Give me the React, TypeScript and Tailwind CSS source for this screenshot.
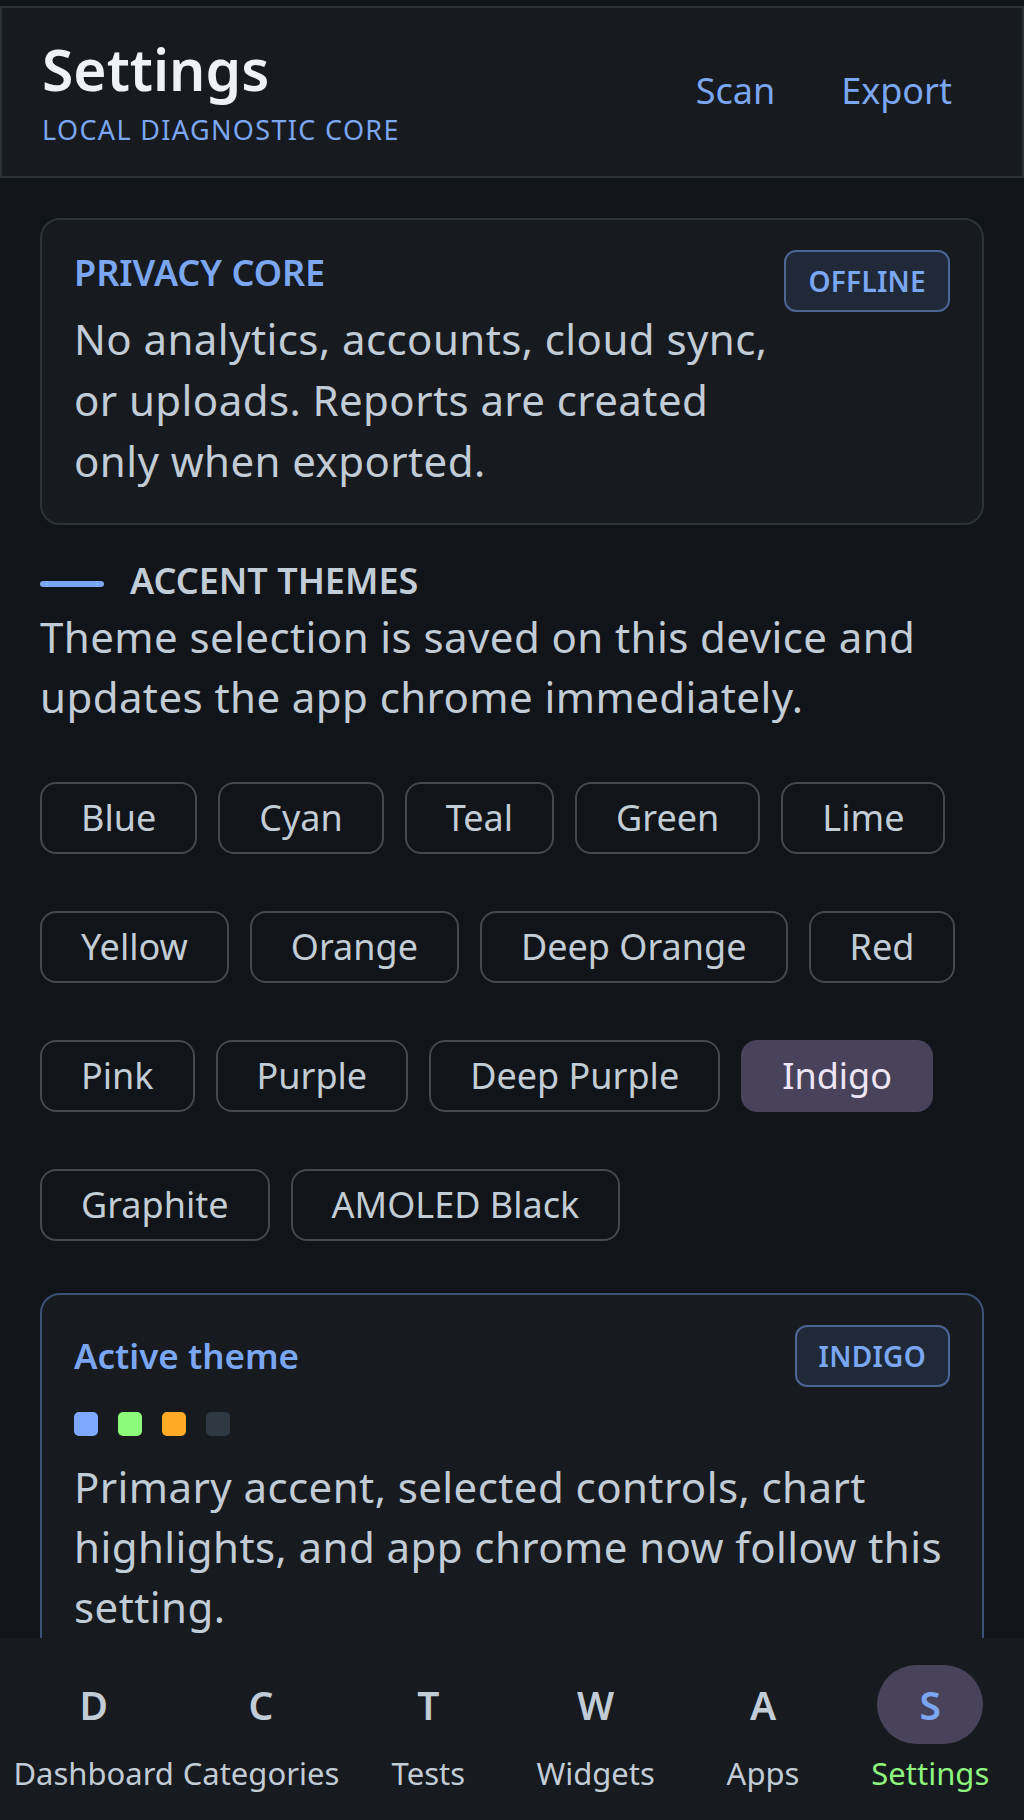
import React from 'react';

const themes = [
  'Blue',
  'Cyan',
  'Teal',
  'Green',
  'Lime',
  'Yellow',
  'Orange',
  'Deep Orange',
  'Red',
  'Pink',
  'Purple',
  'Deep Purple',
  'Indigo',
  'Graphite',
  'AMOLED Black',
];

const navItems = [
  { letter: 'D', label: 'Dashboard' },
  { letter: 'C', label: 'Categories' },
  { letter: 'T', label: 'Tests' },
  { letter: 'W', label: 'Widgets' },
  { letter: 'A', label: 'Apps' },
  { letter: 'S', label: 'Settings', active: true },
];

export default function App() {
  const selected = 'Indigo';

  return (
    <div className="min-h-screen bg-[#111418] pt-[6px] font-['Noto_Sans',sans-serif] text-[#c2ccd6]">
      {/* Top bar */}
      <header className="flex items-center justify-between border-2 border-[#2a3038] bg-[#171a1f] px-10 pt-[26px] pb-[28px]">
        <div>
          <h1 className="text-[57px] leading-[70px] font-semibold text-[#eef2f5]">Settings</h1>
          <div className="mt-[8px] text-[27px] leading-[36px] tracking-[0.05em] text-[#7ba7f2]">
            LOCAL DIAGNOSTIC CORE
          </div>
        </div>
        <div className="flex items-center gap-[6px] text-[36px] leading-[48px] text-[#7ba7f2]">
          <button className="px-[30px]">Scan</button>
          <button className="px-[30px]">Export</button>
        </div>
      </header>

      <main className="px-10 pb-[240px]">
        {/* Privacy Core */}
        <section className="mt-10 flex gap-4 rounded-[20px] border-2 border-[#2c333b] bg-[#171a1f] px-8 pt-[30px] pb-8">
          <div className="min-w-0 flex-1">
            <h2 className="text-[36px] leading-[46px] font-semibold text-[#7ba7f2]">PRIVACY CORE</h2>
            <p className="mt-3 text-[42px] leading-[61px] tracking-[0.01em]">
              No analytics, accounts, cloud sync, or uploads. Reports are created only when exported.
            </p>
          </div>
          <Badge>OFFLINE</Badge>
        </section>

        {/* Accent themes */}
        <section className="mt-[34px]">
          <div className="flex items-center gap-[26px]">
            <span className="mt-[5px] h-[6px] w-16 rounded-full bg-[#7ba7f2]" aria-hidden />
            <h2 className="text-[36px] leading-[44px] font-semibold text-[#c2cdd7]">ACCENT THEMES</h2>
          </div>
          <p className="mt-1 text-[42px] leading-[60px] tracking-[0.01em]">
            Theme selection is saved on this device and updates the app chrome immediately.
          </p>

          <div className="mt-[55px] flex flex-wrap gap-x-[21px] gap-y-[57px]">
            {themes.map((name) => (
              <button
                key={name}
                className={
                  name === selected
                    ? 'flex h-[72px] items-center justify-center rounded-[16px] border-2 border-[#48435a] bg-[#48435a] px-[39px] text-[36px] leading-[48px] text-[#eee6f7]'
                    : 'flex h-[72px] items-center justify-center rounded-[16px] border-2 border-[#46474f] px-[39px] text-[36px] leading-[48px] text-[#c3cdd6]'
                }
              >
                {name}
              </button>
            ))}
          </div>
        </section>

        {/* Active theme */}
        <section className="mt-[52px] rounded-[20px] border-2 border-[#3c5278] bg-[#171a1f] px-8 pt-[30px] pb-8">
          <div className="flex items-center justify-between gap-4">
            <h2 className="text-[35px] leading-[46px] font-semibold text-[#7ba7f2]">Active theme</h2>
            <Badge>INDIGO</Badge>
          </div>
          <div className="mt-[25px] flex gap-[20px]">
            <span className="h-[24px] w-[24px] rounded-[5px] bg-[#7fa9ff]" />
            <span className="h-[24px] w-[24px] rounded-[5px] bg-[#8cfa7a]" />
            <span className="h-[24px] w-[24px] rounded-[5px] bg-[#ffab26]" />
            <span className="h-[24px] w-[24px] rounded-[5px] bg-[#2e3842]" />
          </div>
          <p className="mt-[21px] text-[42px] leading-[60px] tracking-[0.01em]">
            Primary accent, selected controls, chart highlights, and app chrome now follow this setting.
          </p>
          <div className="mt-8 h-[120px]" />
        </section>
      </main>

      {/* Bottom navigation */}
      <nav className="fixed inset-x-0 bottom-0 grid h-[182px] grid-cols-6 bg-[#171a1f] px-[10px] pt-[27px]">
        {navItems.map((item) => (
          <div key={item.label} className="flex flex-col items-center">
            <div
              className={`flex h-[79px] w-[106px] items-center justify-center rounded-full text-[39px] leading-[48px] font-semibold ${
                item.active ? 'bg-[#48435a] text-[#7ba7f2]' : 'text-[#c2ccd6]'
              }`}
            >
              {item.letter}
            </div>
            <div
              className={`mt-[9px] text-[31px] leading-[40px] whitespace-nowrap ${
                item.active ? 'text-[#8ef57e]' : 'text-[#c2ccd6]'
              }`}
            >
              {item.label}
            </div>
          </div>
        ))}
      </nav>
    </div>
  );
}

function Badge({ children }: { children: React.ReactNode }) {
  return (
    <span className="flex h-[62px] shrink-0 items-center rounded-[12px] border-2 border-[#4b6594] bg-[#1f2937] px-[22px] text-[28px] leading-[36px] font-semibold tracking-[0.01em] text-[#7ba7f2]">
      {children}
    </span>
  );
}
